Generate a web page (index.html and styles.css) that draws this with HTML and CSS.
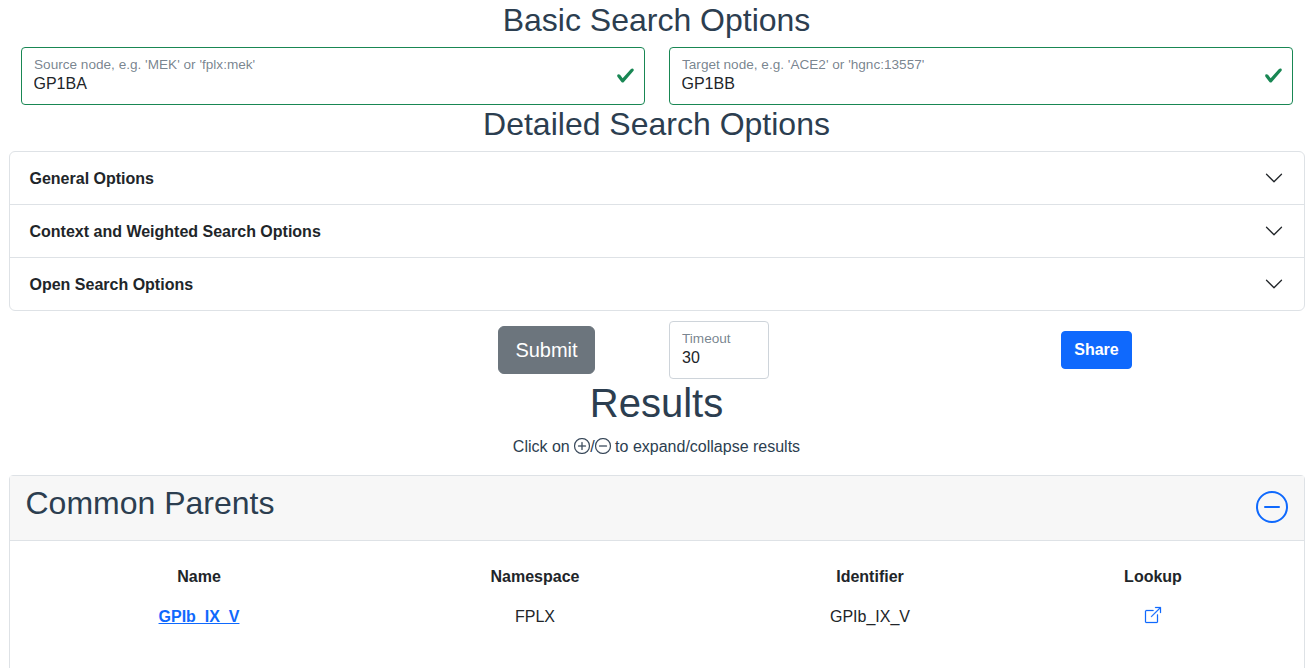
FILE: index.html
```html
<!DOCTYPE html>
<html lang="en">
<head>
<meta charset="utf-8">
<title>Search</title>
<link rel="stylesheet" href="styles.css">
</head>
<body>
<main class="page">
  <h2 class="title">Basic Search Options</h2>
  <div class="nodes">
    <div class="float valid">
      <input class="float-input" type="text" value="GP1BA" id="src">
      <label class="float-label" for="src">Source node, e.g. 'MEK' or 'fplx:mek'</label>
      <svg class="check" viewBox="0 0 8 8"><path fill="#198754" d="M2.3 6.73.6 4.53c-.4-1.04.46-1.4 1.1-.8l1.1 1.4 3.4-3.8c.6-.63 1.6-.27 1.2.7l-4 4.6c-.43.5-.8.4-1.1.1z"/></svg>
    </div>
    <div class="float valid">
      <input class="float-input" type="text" value="GP1BB" id="tgt">
      <label class="float-label" for="tgt">Target node, e.g. 'ACE2' or 'hgnc:13557'</label>
      <svg class="check" viewBox="0 0 8 8"><path fill="#198754" d="M2.3 6.73.6 4.53c-.4-1.04.46-1.4 1.1-.8l1.1 1.4 3.4-3.8c.6-.63 1.6-.27 1.2.7l-4 4.6c-.43.5-.8.4-1.1.1z"/></svg>
    </div>
  </div>
  <h2 class="title title-detailed">Detailed Search Options</h2>
  <div class="accordion">
    <div class="acc-row"><span>General Options</span><svg class="chev" viewBox="0 0 16 16"><path fill-rule="evenodd" d="M1.646 4.646a.5.5 0 0 1 .708 0L8 10.293l5.646-5.647a.5.5 0 0 1 .708.708l-6 6a.5.5 0 0 1-.708 0l-6-6a.5.5 0 0 1 0-.708z"/></svg></div>
    <div class="acc-row"><span>Context and Weighted Search Options</span><svg class="chev" viewBox="0 0 16 16"><path fill-rule="evenodd" d="M1.646 4.646a.5.5 0 0 1 .708 0L8 10.293l5.646-5.647a.5.5 0 0 1 .708.708l-6 6a.5.5 0 0 1-.708 0l-6-6a.5.5 0 0 1 0-.708z"/></svg></div>
    <div class="acc-row"><span>Open Search Options</span><svg class="chev" viewBox="0 0 16 16"><path fill-rule="evenodd" d="M1.646 4.646a.5.5 0 0 1 .708 0L8 10.293l5.646-5.647a.5.5 0 0 1 .708.708l-6 6a.5.5 0 0 1-.708 0l-6-6a.5.5 0 0 1 0-.708z"/></svg></div>
  </div>
  <div class="actions">
    <button class="btn-submit" type="button">Submit</button>
    <div class="float timeout">
      <input class="float-input" type="text" value="30" id="timeout">
      <label class="float-label" for="timeout">Timeout</label>
    </div>
    <button class="btn-share" type="button">Share</button>
  </div>
  <h1 class="results">Results</h1>
  <p class="hint">Click on <svg class="hint-icon" viewBox="0 0 16 16"><path d="M8 15A7 7 0 1 1 8 1a7 7 0 0 1 0 14zm0 1A8 8 0 1 0 8 0a8 8 0 0 0 0 16z"/><path d="M8 4a.5.5 0 0 1 .5.5v3h3a.5.5 0 0 1 0 1h-3v3a.5.5 0 0 1-1 0v-3h-3a.5.5 0 0 1 0-1h3v-3A.5.5 0 0 1 8 4z"/></svg>/<svg class="hint-icon" viewBox="0 0 16 16"><path d="M8 15A7 7 0 1 1 8 1a7 7 0 0 1 0 14zm0 1A8 8 0 1 0 8 0a8 8 0 0 0 0 16z"/><path d="M4 8a.5.5 0 0 1 .5-.5h7a.5.5 0 0 1 0 1h-7A.5.5 0 0 1 4 8z"/></svg> to expand/collapse results</p>
  <section class="card">
    <header class="card-head">
      <h2 class="card-title">Common Parents</h2>
      <svg class="collapse" viewBox="0 0 16 16"><path d="M8 15A7 7 0 1 1 8 1a7 7 0 0 1 0 14zm0 1A8 8 0 1 0 8 0a8 8 0 0 0 0 16z"/><path d="M4 8a.5.5 0 0 1 .5-.5h7a.5.5 0 0 1 0 1h-7A.5.5 0 0 1 4 8z"/></svg>
    </header>
    <div class="card-body">
      <table class="table">
        <colgroup><col class="c1"><col class="c2"><col class="c3"><col class="c4"></colgroup>
        <thead><tr><th>Name</th><th>Namespace</th><th>Identifier</th><th>Lookup</th></tr></thead>
        <tbody><tr>
          <td><a class="name-link" href="#">GPIb_IX_V</a></td>
          <td>FPLX</td>
          <td>GPIb_IX_V</td>
          <td><a class="ext" href="#"><svg viewBox="0 0 16 16"><path fill-rule="evenodd" d="M8.636 3.5a.5.5 0 0 0-.5-.5H1.5A1.5 1.5 0 0 0 0 4.5v10A1.5 1.5 0 0 0 1.5 16h10a1.5 1.5 0 0 0 1.5-1.5V7.864a.5.5 0 0 0-1 0V14.5a.5.5 0 0 1-.5.5h-10a.5.5 0 0 1-.5-.5v-10a.5.5 0 0 1 .5-.5h6.636a.5.5 0 0 0 .5-.5z"/><path fill-rule="evenodd" d="M16 .5a.5.5 0 0 0-.5-.5h-5a.5.5 0 0 0 0 1h3.793L6.146 9.146a.5.5 0 1 0 .708.708L15 1.707V5.5a.5.5 0 0 0 1 0v-5z"/></svg></a></td>
        </tr></tbody>
      </table>
    </div>
  </section>
</main>
</body>
</html>
```
FILE: styles.css
```css
* { box-sizing: border-box; }
html, body { height: 100%; overflow: hidden; }
body {
  margin: 0;
  font-family: "Liberation Sans", Arial, sans-serif;
  font-size: 16px;
  line-height: 1.5;
  color: #212529;
  background: #fff;
}
.page { padding: 1px 8.5px 0; text-align: center; }
.title {
  margin: 0 0 8px;
  font-size: 32px;
  font-weight: 400;
  line-height: 38.4px;
  color: #2c3e50;
}
.title-detailed { margin-bottom: 7px; }
.nodes {
  display: grid;
  grid-template-columns: 1fr 1fr;
  gap: 24px;
  padding: 0 12px;
}
.float { position: relative; height: 58px; text-align: left; }
.float-input {
  display: block;
  width: 100%;
  height: 100%;
  padding: 24px 12px 8px;
  font: inherit;
  line-height: 24px;
  color: #212529;
  background: #fff;
  border: 1px solid #ced4da;
  border-radius: 4px;
  outline: none;
}
.valid .float-input { border-color: #198754; }
.float-label {
  position: absolute;
  left: 13px;
  top: 9px;
  font-size: 13.6px;
  line-height: 18px;
  color: rgba(44, 62, 80, .65);
}
.valid .float-label { left: 13.5px; }
.check { position: absolute; right: 9.5px; top: 19px; width: 19px; height: 19px; }
.accordion { border: 1px solid #dee2e6; border-radius: 6px; background: #fff; }
.acc-row {
  display: flex;
  justify-content: space-between;
  align-items: center;
  height: 53px;
  padding: 2px 20px 0;
  font-weight: 700;
  border-top: 1px solid #dee2e6;
}
.acc-row:first-child { height: 52px; border-top: 0; }
.chev { width: 20px; height: 20px; fill: #212529; margin-top: -2px; }
.actions { display: flex; align-items: center; height: 68px; padding: 10px 0 0 489.5px; }
.btn-submit {
  width: 97px;
  height: 48px;
  font: inherit;
  font-size: 20px;
  color: #fff;
  background: #6c757d;
  border: 1px solid #6c757d;
  border-radius: 6px;
}
.timeout { width: 100px; margin-left: 74px; }
.btn-share {
  width: 71px;
  height: 38px;
  margin-left: 292px;
  font: inherit;
  font-weight: 700;
  color: #fff;
  background: #0f69fd;
  border: 1px solid #0f69fd;
  border-radius: 4px;
}
.results { margin: 0 0 8px; font-size: 40px; font-weight: 400; line-height: 48px; color: #2c3e50; }
.hint { margin: 0 0 16px; color: #2c3e50; line-height: 24px; }
.hint-icon { width: 16px; height: 16px; fill: #2c3e50; stroke: #2c3e50; stroke-width: .2; vertical-align: -2px; }
.card { border: 1px solid #dee2e6; border-radius: 4px; text-align: left; height: 400px; }
.card-head {
  display: flex;
  justify-content: space-between;
  height: 65px;
  padding: 8px 16px;
  background: #f7f7f7;
  border-bottom: 1px solid #dee2e6;
}
.card-title { margin: 0; font-size: 32px; font-weight: 400; line-height: 38.4px; color: #2c3e50; }
.collapse { width: 32px; height: 32px; fill: #0f69fd; margin-top: 7px; }
.card-body { padding: 16px 16px 16px 16.5px; }
.table { width: 1238px; border-collapse: collapse; table-layout: fixed; text-align: center; }
.c1 { width: 346px; }
.c2 { width: 326px; }
.c3 { width: 344px; }
.c4 { width: 222px; }
.table th { padding: 8px; font-weight: 700; height: 40px; }
.table td { padding: 8px; height: 40px; }
.name-link { color: #0f69fd; font-weight: 700; }
.ext { display: inline-block; width: 16px; height: 16px; vertical-align: -1px; }
.ext svg { display: block; width: 16px; height: 16px; fill: #0f69fd; stroke: #0f69fd; stroke-width: .25; overflow: visible; }
```
